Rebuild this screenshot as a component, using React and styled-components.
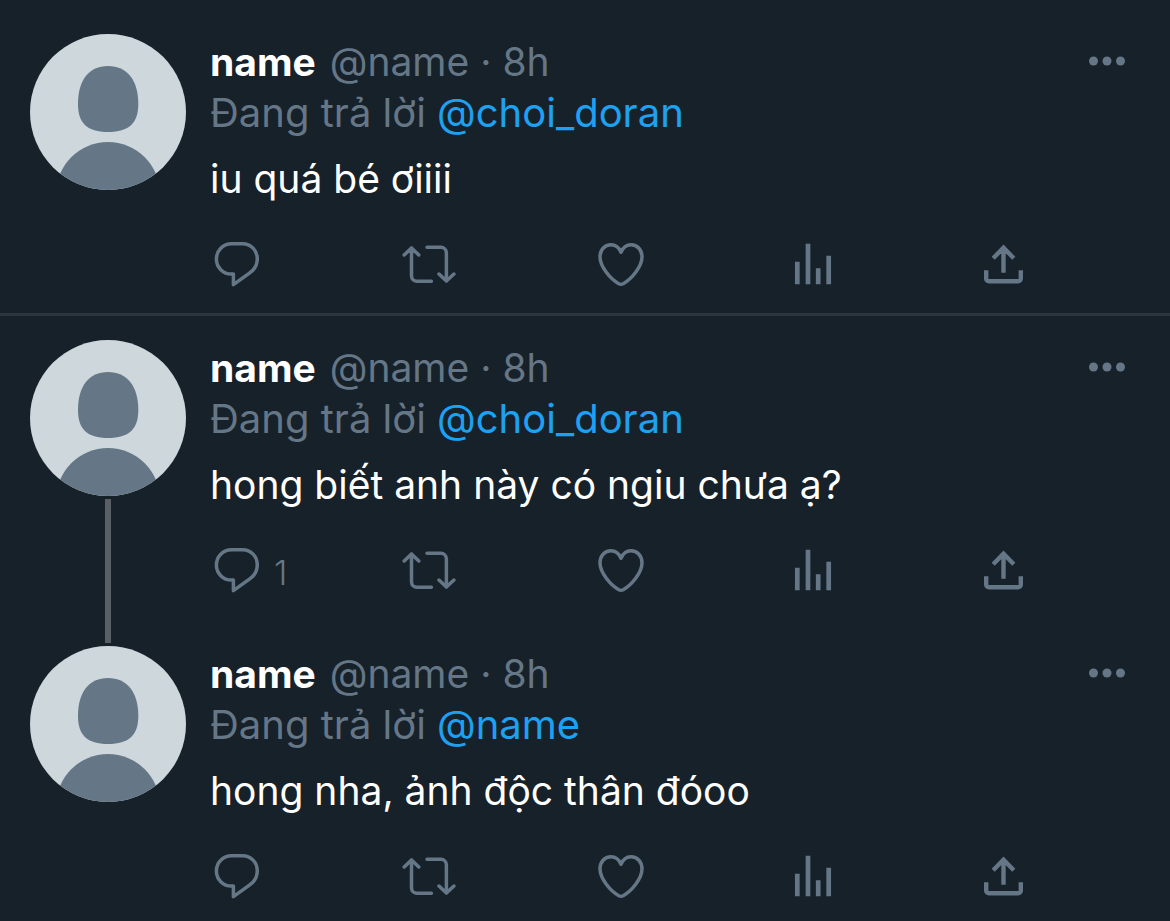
import React from "react";
import styled, { createGlobalStyle } from "styled-components";

const colors = {
  background: "#17212a",
  text: "#ffffff",
  muted: "#657786",
  link: "#1da1f2",
  divider: "#2b353e",
  thread: "#5a5f66",
  avatar: "#cdd7dc",
};

const GlobalStyle = createGlobalStyle`
  * {
    box-sizing: border-box;
  }
  body {
    margin: 0;
    background: ${colors.background};
    color: ${colors.text};
    font-family: Inter, "Liberation Sans", sans-serif;
    font-size: 39px;
    line-height: 51px;
  }
`;

const Timeline = styled.main`
  padding-top: 10px;
`;

const TweetCard = styled.article`
  display: flex;
  gap: 24px;
  padding: 24px 45px 0 30px;
  border-bottom: 3px solid ${(p) => (p.$divided ? colors.divider : "transparent")};

  &:last-child {
    border-bottom: 0;
  }
`;

const AvatarColumn = styled.div`
  display: flex;
  flex: none;
  flex-direction: column;
  align-items: center;
  width: 156px;
`;

const AvatarImage = styled.svg`
  display: block;
  flex: none;
  width: 156px;
  height: 156px;
  border-radius: 50%;
`;

const ThreadLine = styled.div`
  flex: 1;
  width: 6px;
  margin: 3px 0 -24px;
  background: ${colors.thread};
`;

const Body = styled.div`
  flex: 1;
  min-width: 0;
  padding: 2px 0 24px;

  ${TweetCard}:last-child & {
    padding-bottom: 20px;
  }
`;

const Header = styled.header`
  display: flex;
  align-items: center;
  justify-content: space-between;
`;

const Byline = styled.div`
  display: flex;
  gap: 14px;
  color: ${colors.muted};
`;

const Name = styled.strong`
  color: ${colors.text};
  font-weight: 700;
`;

const ReplyingTo = styled.div`
  color: ${colors.muted};
  font-size: 40px;
`;

const Mention = styled.a`
  color: ${colors.link};
  text-decoration: none;
`;

const Message = styled.p`
  margin: 15px 0 37px;
`;

const IconButton = styled.button`
  display: flex;
  align-items: center;
  gap: 10px;
  padding: 0;
  border: 0;
  background: none;
  color: ${colors.muted};
  font: inherit;
  cursor: pointer;
`;

const Actions = styled.div`
  display: grid;
  grid-template-columns: repeat(4, 1fr) 54px;
  justify-items: start;
  height: 48px;
  margin-right: 93px;
`;

const ActionIcon = styled.svg`
  display: block;
  flex: none;
  width: 54px;
  height: 48px;
  fill: none;
  stroke: currentColor;
  stroke-width: 3.5;
  stroke-linecap: round;
  stroke-linejoin: round;
`;

const MoreIcon = styled.svg`
  display: block;
  width: 36px;
  height: 12px;
  fill: currentColor;
`;

const Count = styled.span`
  padding-top: 4px;
  font-size: 34px;
  font-weight: 300;
  line-height: 44px;
`;

const icons = {
  reply: (
    <path d="M21.500 2.800h11C41 2.800 47.300 9.400 47.300 17.800c0 6-3 11.200-8.200 14.600L23.400 43.700V33.100h-1.900C13 33.100 6.400 26.400 6.400 18 6.400 9.400 13 2.800 21.500 2.800z" />
  ),
  retweet: (
    <path d="M2.200 14L9.500 6.900l7.300 7.100M9.500 6.900v27.800a5.600 5.600 0 0 0 5.600 5.600h14.300M25 6.300h13.800a5.600 5.600 0 0 1 5.600 5.600v28M37 33l7.400 7.100L51.900 33" />
  ),
  like: (
    <path d="M27 11.300C25 6.600 21.500 3.800 17 3.800 10.500 3.800 6 9 6 15.800c0 10 10.500 22.200 18.800 26.900 1.500.8 2.900.8 4.400 0C37.500 38 48 25.800 48 15.800c0-6.800-4.500-12-11-12-4.500 0-8 2.800-10 7.500z" />
  ),
  stats: (
    <path
      strokeWidth="4.7"
      strokeLinecap="butt"
      d="M11.300 20.700v22.600M22 2.700v40.600M32.200 27.300v16M42.700 14.700v28.600"
    />
  ),
  share: (
    <path
      strokeWidth="4.4"
      strokeLinecap="butt"
      strokeLinejoin="miter"
      d="M15.200 17.300L25.500 6.700l10.300 10.600M25.500 6v25.700M8.200 29.300v8.200a2.700 2.700 0 0 0 2.700 2.700h29.200a2.700 2.700 0 0 0 2.700-2.700v-8.200"
    />
  ),
};

const actionList = [
  { id: "reply", label: "Trả lời" },
  { id: "retweet", label: "Tweet lại" },
  { id: "like", label: "Thích" },
  { id: "stats", label: "Thống kê" },
  { id: "share", label: "Chia sẻ" },
];

const tweets = [
  { id: 1, mention: "@choi_doran", text: "iu quá bé ơiiii", divided: true },
  {
    id: 2,
    mention: "@choi_doran",
    text: "hong biết anh này có ngiu chưa ạ?",
    replies: 1,
    threaded: true,
  },
  { id: 3, mention: "@name", text: "hong nha, ảnh độc thân đóoo" },
];

function Avatar() {
  return (
    <AvatarImage viewBox="0 0 156 156" aria-hidden="true">
      <rect width="156" height="156" fill={colors.avatar} />
      <path
        fill={colors.muted}
        d="M78 32C59 32 48 46 48 70c0 19 9 28 30 28s30.300-9 30.300-28C108.300 46 97 32 78 32z"
      />
      <circle cx="78" cy="160" r="52" fill={colors.muted} />
    </AvatarImage>
  );
}

function Tweet({ mention, text, replies, divided, threaded }) {
  return (
    <TweetCard $divided={divided}>
      <AvatarColumn>
        <Avatar />
        {threaded && <ThreadLine />}
      </AvatarColumn>
      <Body>
        <Header>
          <Byline>
            <Name>name</Name>
            <span>@name · 8h</span>
          </Byline>
          <IconButton type="button" aria-label="Thêm">
            <MoreIcon viewBox="0 0 36 12" aria-hidden="true">
              <circle cx="4.500" cy="5" r="4.500" />
              <circle cx="18" cy="5" r="4.500" />
              <circle cx="31.500" cy="5" r="4.500" />
            </MoreIcon>
          </IconButton>
        </Header>
        <ReplyingTo>
          Đang trả lời <Mention href="#">{mention}</Mention>
        </ReplyingTo>
        <Message>{text}</Message>
        <Actions>
          {actionList.map(({ id, label }) => (
            <IconButton key={id} type="button" aria-label={label}>
              <ActionIcon viewBox="0 0 54 48" aria-hidden="true">
                {icons[id]}
              </ActionIcon>
              {id === "reply" && replies && <Count>{replies}</Count>}
            </IconButton>
          ))}
        </Actions>
      </Body>
    </TweetCard>
  );
}

export default function App() {
  return (
    <>
      <GlobalStyle />
      <Timeline>
        {tweets.map((tweet) => (
          <Tweet key={tweet.id} {...tweet} />
        ))}
      </Timeline>
    </>
  );
}
